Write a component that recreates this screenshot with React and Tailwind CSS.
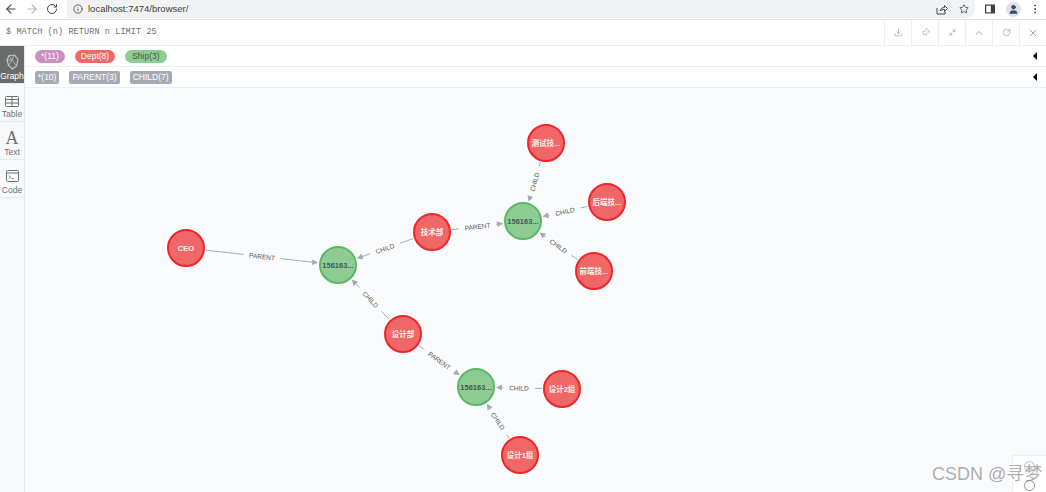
import { ArrowLeft, ArrowRight, RotateCw, Info, Star, MoreVertical, User, Download, Pin, Minimize2, ChevronUp, X } from 'lucide-react';

const NODES = {
  ceo:    { x: 186, y: 249, label: 'CEO' },
  ship1:  { x: 338, y: 266, label: '156163...', ship: true },
  tech:   { x: 432, y: 233, label: '技术部' },
  ship2:  { x: 523, y: 222, label: '156163...', ship: true },
  test:   { x: 546, y: 144, label: '测试技...' },
  back:   { x: 607, y: 203, label: '后端技...' },
  front:  { x: 594, y: 272, label: '前端技...' },
  design: { x: 403, y: 335, label: '设计部' },
  ship3:  { x: 476, y: 388, label: '156163...', ship: true },
  d2:     { x: 562, y: 390, label: '设计2组' },
  d1:     { x: 520, y: 456, label: '设计1组' },
};

const EDGES = [
  ['ceo', 'ship1', 'PARENT'],
  ['tech', 'ship1', 'CHILD'],
  ['design', 'ship1', 'CHILD'],
  ['tech', 'ship2', 'PARENT'],
  ['test', 'ship2', 'CHILD'],
  ['back', 'ship2', 'CHILD'],
  ['front', 'ship2', 'CHILD'],
  ['design', 'ship3', 'PARENT'],
  ['d2', 'ship3', 'CHILD'],
  ['d1', 'ship3', 'CHILD'],
];

const R = 19;
// the graph svg starts here on the page
const OX = 25;
const OY = 89;

function Edge({ from, to, label }) {
  const a = NODES[from];
  const b = NODES[to];
  const dx = b.x - a.x;
  const dy = b.y - a.y;
  const len = Math.hypot(dx, dy);
  const ux = dx / len;
  const uy = dy / len;
  const mid = (len + 0) / 2;
  const gap = label.length * 2.6 + 3;
  const pt = (d) => [a.x + ux * d - OX, a.y + uy * d - OY];
  const [x1, y1] = pt(R + 1);
  const [x2, y2] = pt(mid - gap);
  const [x3, y3] = pt(mid + gap);
  const [x4, y4] = pt(len - R - 6);
  const [tipX, tipY] = pt(len - R - 1);
  const [mx, my] = pt(mid);
  let angle = (Math.atan2(dy, dx) * 180) / Math.PI;
  if (angle > 90) angle -= 180;
  if (angle < -90) angle += 180;
  const deg = (Math.atan2(dy, dx) * 180) / Math.PI;
  return (
    <g>
      <line x1={x1} y1={y1} x2={x2} y2={y2} stroke="#a5abb6" strokeWidth="1" />
      <line x1={x3} y1={y3} x2={x4} y2={y4} stroke="#a5abb6" strokeWidth="1" />
      <polygon points="0,0 -6,-3 -6,3" fill="#a5abb6" transform={`translate(${tipX} ${tipY}) rotate(${deg})`} />
      <text
        x={mx}
        y={my}
        transform={`rotate(${angle} ${mx} ${my})`}
        textAnchor="middle"
        dominantBaseline="central"
        fontSize="6.5"
        fill="#555"
      >
        {label}
      </text>
    </g>
  );
}

function Node({ n }) {
  return (
    <g>
      <circle
        cx={n.x - OX}
        cy={n.y - OY}
        r={R - 1}
        fill={n.ship ? '#8dcc93' : '#f16667'}
        stroke={n.ship ? '#5db665' : '#eb2728'}
        strokeWidth="2"
      />
      <text
        x={n.x - OX}
        y={n.y - OY}
        textAnchor="middle"
        dominantBaseline="central"
        fontSize="7.5"
        fontWeight="700"
        fill={n.ship ? '#2a2c34' : '#ffffff'}
        fillOpacity={n.ship ? 0.75 : 0.95}
      >
        {n.label}
      </text>
    </g>
  );
}

function ToolBtn({ children }) {
  return <div className="w-[27px] h-full flex items-center justify-center border-l border-[#eceef1] text-[#a3a9b2]">{children}</div>;
}

function SideTab({ label, active, h, children }) {
  return (
    <div className={`flex flex-col items-center justify-end pb-[1px] border-b border-[#e6e9ef] ${h} ${active ? 'bg-[#6a6c6c] text-white' : 'text-[#717172]'}`}>
      {children}
      <span className="text-[8.5px] leading-[12px]">{label}</span>
    </div>
  );
}

export default function App() {
  return (
    <div className="relative w-[1046px] h-[492px] overflow-hidden bg-white flex flex-col font-['Liberation_Sans','Noto_Sans_CJK_SC',sans-serif]">
      {/* browser bar */}
      <div className="h-[20px] shrink-0 flex items-start border-b border-[#dfe1e5]">
        <div className="w-[67px] h-[18px] flex items-center pl-[4px] gap-[7px] text-[#45484c]">
          <ArrowLeft size={14} />
          <ArrowRight size={14} className="text-[#b4b7bb]" />
          <RotateCw size={12} />
        </div>
        <div className="w-[908px] h-[18px] bg-[#f0f2f4] rounded-br-[9px] flex items-center pl-[6px] pr-[6px]">
          <Info size={10} className="text-[#45484c]" />
          <span className="ml-[5px] text-[9.5px] text-[#3c4043]">localhost:7474/browser/</span>
          <div className="ml-auto flex items-center gap-[11px] text-[#45484c]">
            <svg width="12" height="11" viewBox="0 0 12 11" fill="none" stroke="currentColor" strokeWidth="1">
              <path d="M1 4v6h8V7.5M4 7c.5-2.5 2.500-3.500 4.500-3.500V1.500L11.500 4.500 8.500 7.500V5.500C6.500 5.500 5 6 4 7z" />
            </svg>
            <Star size={10} strokeWidth={2} />
          </div>
        </div>
        <div className="flex-1 h-[18px] flex items-center pl-[10px] text-[#3c4043]">
          <svg width="10" height="10" viewBox="0 0 10 10">
            <path d="M0 0.500h10v9H0z" fill="#3c4043" />
            <path d="M1.200 1.700h4.600v6.600H1.200z" fill="#ffffff" />
          </svg>
          <div className="ml-[11px] w-[15px] h-[15px] rounded-full bg-[#dfe2e8] flex items-center justify-center">
            <User size={11} fill="#3c4a63" stroke="#3c4a63" />
          </div>
          <MoreVertical size={12} className="ml-[8px]" />
        </div>
      </div>

      {/* editor row */}
      <div className="h-[26px] shrink-0 flex items-center border-b border-[#eceef1]">
        <span className="ml-[6px] font-['Liberation_Mono',monospace] text-[8.5px] tracking-[0.1px] text-[#6b6f72]">$ MATCH (n) RETURN n LIMIT 25</span>
        <div className="ml-auto flex h-full">
          <ToolBtn><Download size={9} /></ToolBtn>
          <ToolBtn><Pin size={9} className="rotate-45" /></ToolBtn>
          <ToolBtn><Minimize2 size={9} /></ToolBtn>
          <ToolBtn><ChevronUp size={12} /></ToolBtn>
          <ToolBtn><RotateCw size={9} /></ToolBtn>
          <ToolBtn><X size={12} /></ToolBtn>
        </div>
      </div>

      <div className="flex-1 flex min-h-0">
        {/* left tabs */}
        <div className="w-[25px] shrink-0 flex flex-col bg-[#f8f9fb] border-r border-[#e6e9ef]">
          <SideTab label="Graph" active h="h-[38px]">
            <svg width="13" height="16" viewBox="0 0 13 16" fill="none" stroke="#c9cacb" strokeWidth="1.100">
              <path d="M3 1.500 8.500 1 12 5.500 10.500 12 6.500 15 2.500 11.500 1 6z" />
              <path d="M3 1.500 6 6 8.500 1M6 6 1 6M6 6l4.500 6M6 6 2.500 11.500" strokeWidth="0.700" />
            </svg>
          </SideTab>
          <SideTab label="Table" h="h-[38px]">
            <svg width="14" height="11" viewBox="0 0 14 11" fill="none" stroke="#717172" strokeWidth="1" className="mb-[1px]">
              <rect x="0.500" y="0.500" width="13" height="10" rx="1" />
              <path d="M0.500 3.500h13M0.500 7h13M7 0.500v10" />
            </svg>
          </SideTab>
          <SideTab label="Text" h="h-[38px]">
            <span className="font-['Liberation_Serif',serif] text-[18px] leading-[16px]">A</span>
          </SideTab>
          <SideTab label="Code" h="h-[38px]">
            <svg width="13" height="12" viewBox="0 0 13 12" fill="none" stroke="#717172" strokeWidth="1" className="mb-[2px]">
              <rect x="0.500" y="0.500" width="12" height="11" rx="1" />
              <path d="M0.500 3h12M3 5.500l1.500 1.500L3 8.500M5.500 8.500h2" />
            </svg>
          </SideTab>
        </div>

        <div className="flex-1 min-w-0 flex flex-col">
          {/* labels */}
          <div className="h-[21px] shrink-0 flex items-center pl-[10px] gap-[10px] border-b border-[#eceef1]">
            <span className="h-[13px] leading-[13px] px-[6px] rounded-full bg-[#c990c0] text-white text-[8.5px]">*(11)</span>
            <span className="h-[13px] leading-[13px] px-[6px] rounded-full bg-[#f16667] text-white text-[8.5px]">Dept(8)</span>
            <span className="h-[13px] leading-[13px] px-[7px] rounded-full bg-[#8dcc93] text-[#2a2c34]/80 text-[8.5px]">Ship(3)</span>
            <span className="ml-auto mr-[9px] w-0 h-0 border-y-[4px] border-y-transparent border-r-[4px] border-r-black" />
          </div>
          {/* relationship types */}
          <div className="h-[21px] shrink-0 flex items-center pl-[10px] gap-[10px] border-b border-[#eceef1]">
            <span className="h-[13px] leading-[13px] px-[3px] rounded-[2px] bg-[#a5abb6] text-white text-[8.5px]">*(10)</span>
            <span className="h-[13px] leading-[13px] px-[3px] rounded-[2px] bg-[#a5abb6] text-white text-[8.5px]">PARENT(3)</span>
            <span className="h-[13px] leading-[13px] px-[3px] rounded-[2px] bg-[#a5abb6] text-white text-[8.5px]">CHILD(7)</span>
            <span className="ml-auto mr-[9px] w-0 h-0 border-y-[4px] border-y-transparent border-r-[4px] border-r-black" />
          </div>
          {/* graph */}
          <div className="relative flex-1 min-h-0 bg-[#fafbfd]">
            <svg className="block w-full h-full">
              {EDGES.map(([from, to, label], i) => (
                <Edge key={i} from={from} to={to} label={label} />
              ))}
              {Object.entries(NODES).map(([id, n]) => (
                <Node key={id} n={n} />
              ))}
            </svg>
            {/* zoom control, cut off by the window */}
            <div className="absolute right-0 bottom-0 w-[34px] h-[37px] bg-white border-l border-t border-[#eceef1] flex flex-col items-center pt-[5px] gap-[8px]">
              <span className="w-[11px] h-[11px] rounded-full border border-[#b8bcc2]" />
              <span className="w-[11px] h-[11px] rounded-full border border-[#8e9297]" />
            </div>
          </div>
        </div>
      </div>

      {/* watermark */}
      <span className="absolute left-[932px] top-[463px] text-[18px] leading-[22px] text-[#8a8a8a]/70 whitespace-nowrap">CSDN @寻梦</span>
    </div>
  );
}
